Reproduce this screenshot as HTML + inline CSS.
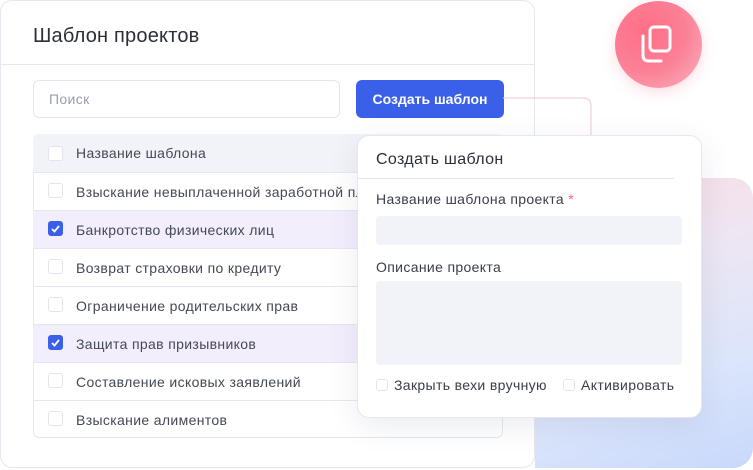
<!DOCTYPE html><html><head><meta charset="utf-8"><style>
*{box-sizing:border-box;margin:0;padding:0}
body{width:753px;height:470px;background:#fff;position:relative;overflow:hidden;font-family:"Liberation Sans",sans-serif;color:#3a3d4a;letter-spacing:0.35px}
.abs{position:absolute}
.card{left:0;top:0;width:535px;height:468px;border:1px solid #e6e8f0;border-radius:12px;background:#fff}
.cb{position:absolute;width:15px;height:15px;border:1px solid #e3e5ee;border-radius:3px;background:#fff}
.cb.on{background:#3a5fe8;border-color:#3a5fe8}
.row{position:absolute;left:33px;width:470px;height:38px;border-top:1px solid #e6e8f0;font-size:14px;line-height:38px;padding-left:43px;color:#454856;white-space:nowrap;overflow:hidden}
</style></head><body>
<div class="abs" style="left:535px;top:178px;width:218px;height:290px;border-radius:0 20px 20px 0;background:linear-gradient(160deg,#fadce3 0%,#eee6f2 35%,#dbe5fb 70%,#c8d8fb 100%)"></div>
<div class="abs card"></div>
<div class="abs" style="left:33px;top:25px;font-size:20px;color:#2c2f3a;letter-spacing:0.2px">Шаблон проектов</div>
<div class="abs" style="left:0;top:64px;width:535px;border-top:1px solid #e6e8f0"></div>
<div class="abs" style="left:33px;top:80px;width:307px;height:38px;border:1px solid #e3e5ee;border-radius:6px;font-size:14px;color:#9a9eab;line-height:36px;padding-left:15px">Поиск</div>
<div class="abs" style="left:356px;top:80px;width:148px;height:38px;border-radius:6px;background:#3a5fe8;color:#fff;font-size:14px;font-weight:bold;line-height:38px;text-align:center;letter-spacing:0">Создать шаблон</div>
<svg class="abs" style="left:503px;top:97px" width="100" height="40"><path d="M0 1 H80 Q88 1 88 9 V40" fill="none" stroke="#ecc7d2" stroke-width="1"/></svg>
<div class="abs" style="left:33px;top:134px;width:470px;height:304px;border:1px solid #e6e8f0;border-radius:6px;overflow:hidden"></div>
<div class="row" style="top:134px;background:#f2f3f8;border-top:none;border-radius:6px 6px 0 0">Название шаблона</div>
<div class="row" style="top:172px">Взыскание невыплаченной заработной платы</div>
<div class="row" style="top:210px;background:#f3eefc">Банкротство физических лиц</div>
<div class="row" style="top:248px">Возврат страховки по кредиту</div>
<div class="row" style="top:286px">Ограничение родительских прав</div>
<div class="row" style="top:324px;background:#f3eefc">Защита прав призывников</div>
<div class="row" style="top:362px">Составление исковых заявлений</div>
<div class="row" style="top:400px">Взыскание алиментов</div>
<div class="cb" style="left:48px;top:146px"></div>
<div class="cb" style="left:48px;top:183px"></div>
<div class="cb on" style="left:48px;top:221px"><svg width="13" height="13"><path d="M3 7 L5.5 9.5 L10 4" stroke="#fff" stroke-width="1.8" fill="none"/></svg></div>
<div class="cb" style="left:48px;top:259px"></div>
<div class="cb" style="left:48px;top:297px"></div>
<div class="cb on" style="left:48px;top:335px"><svg width="13" height="13"><path d="M3 7 L5.5 9.5 L10 4" stroke="#fff" stroke-width="1.8" fill="none"/></svg></div>
<div class="cb" style="left:48px;top:373px"></div>
<div class="cb" style="left:48px;top:411px"></div>
<div class="abs" style="left:357px;top:135px;width:345px;height:283px;background:#fff;border:1px solid #e6e8f0;border-radius:12px;box-shadow:0 8px 30px rgba(60,70,110,.10)"></div>
<div class="abs" style="left:376px;top:151px;font-size:16px;color:#2c2f3a">Создать шаблон</div>
<div class="abs" style="left:357px;top:178px;width:317px;border-top:1px solid #e6e8f0"></div>
<div class="abs" style="left:376px;top:191px;font-size:14px;color:#3a3d4a">Название шаблона проекта <span style="color:#f06a80">*</span></div>
<div class="abs" style="left:376px;top:216px;width:306px;height:29px;background:#f2f3f8;border-radius:4px"></div>
<div class="abs" style="left:376px;top:259px;font-size:14px;color:#3a3d4a">Описание проекта</div>
<div class="abs" style="left:376px;top:281px;width:306px;height:84px;background:#f2f3f8;border-radius:4px"></div>
<div class="cb" style="left:376px;top:379px;width:12px;height:12px"></div>
<div class="abs" style="left:394px;top:377px;font-size:14px">Закрыть вехи вручную</div>
<div class="cb" style="left:563px;top:379px;width:12px;height:12px"></div>
<div class="abs" style="left:581px;top:377px;font-size:14px">Активировать</div>
<div class="abs" style="left:615px;top:1px;width:87px;height:87px;border-radius:50%;background:radial-gradient(circle at 35% 35%,#ff6f86 0%,#fb8096 50%,#fbb4c1 100%);box-shadow:0 4px 14px rgba(250,120,140,.25)"></div>
<svg class="abs" style="left:636px;top:22px" width="44" height="44"><rect x="14" y="5" width="20" height="24" rx="4" fill="none" stroke="#fff" stroke-width="3"/><path d="M7 14 V33 Q7 39 13 39 H25" fill="none" stroke="#fff" stroke-width="3" stroke-linecap="round"/></svg>
</body></html>
